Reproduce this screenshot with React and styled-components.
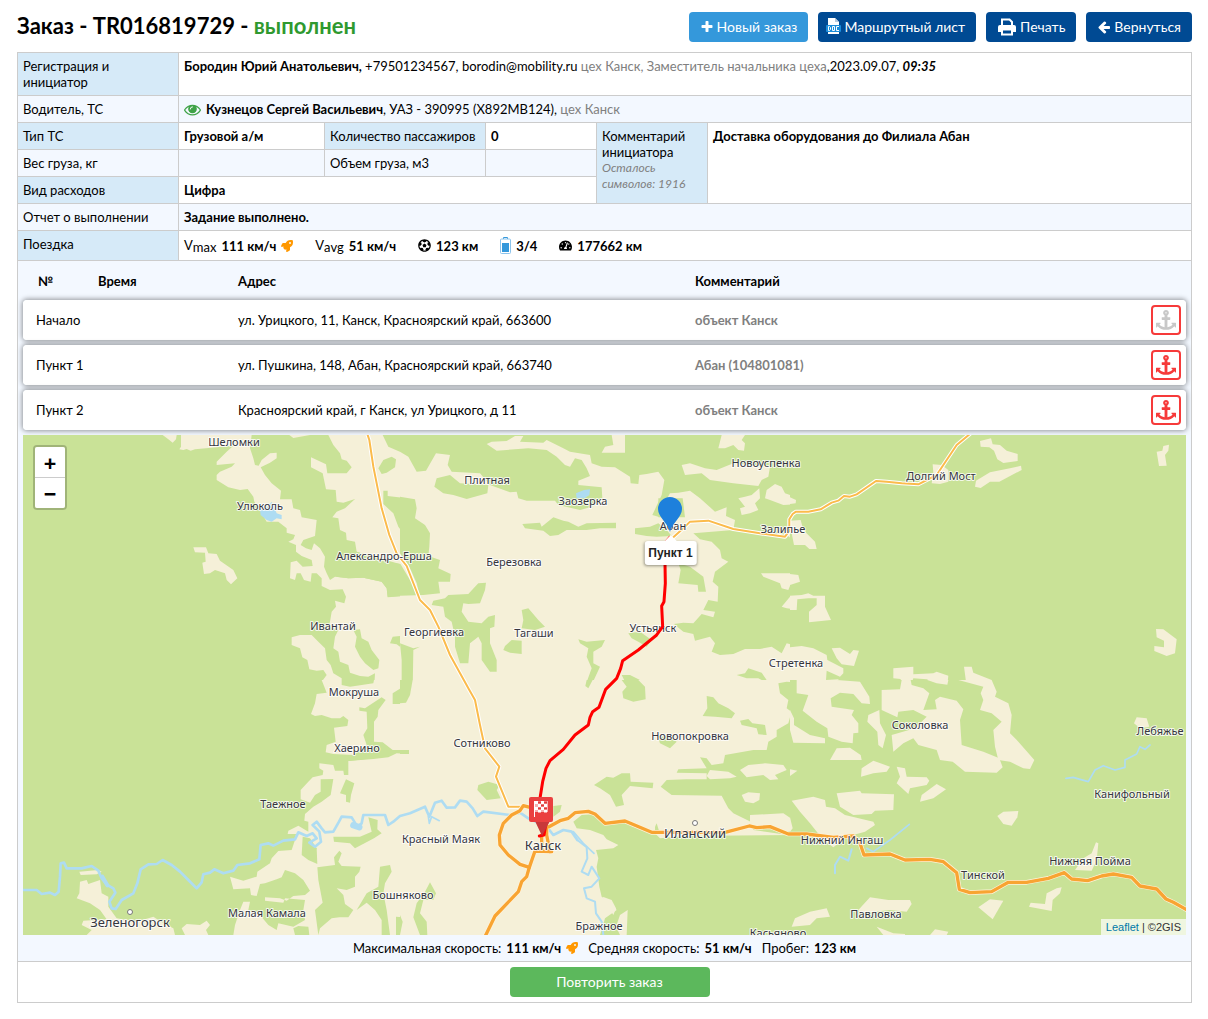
import React from "react";
import styled, { createGlobalStyle } from "styled-components";
import { FaRocket, FaFutbol, FaTachometerAlt } from "react-icons/fa";

const GlobalStyle = createGlobalStyle`
  * {
    box-sizing: border-box;
  }
  body {
    margin: 0;
    background: #fff;
    color: #000;
    font: 13px/16px "Trebuchet MS", Lato, "Open Sans", sans-serif;
  }
`;

const Page = styled.main`
  padding: 12px 16px 16px 17px;
`;

const Header = styled.header`
  display: flex;
  align-items: flex-start;
  justify-content: space-between;
  margin-bottom: 10px;
`;

const Title = styled.h1`
  margin: 0;
  font-size: 22px;
  line-height: 28px;
  font-weight: 700;
  & > span {
    color: #2f992f;
  }
`;

const Toolbar = styled.div`
  display: flex;
  gap: 10px;
`;

const Button = styled.button`
  display: inline-flex;
  align-items: center;
  justify-content: center;
  gap: 3px;
  height: 30px;
  padding: 0 11px;
  border: none;
  border-radius: 4px;
  background: ${(p) => p.$color || "#004a93"};
  color: #fff;
  font: inherit;
  font-size: 14px;
  white-space: nowrap;
  cursor: pointer;
`;

const DocButton = styled(Button)`
  padding: 0 11px 0 8px;
`;

const RepeatButton = styled(Button)`
  width: 200px;
`;

const OrderTable = styled.table`
  width: 100%;
  table-layout: fixed;
  border-collapse: collapse;
`;

const Col = styled.col`
  width: ${(p) => p.$width}px;
`;

const Row = styled.tr`
  background: ${(p) => (p.$even ? "#f3f8ff" : "#fff")};
`;

const Label = styled.th`
  padding: 5px;
  border: 1px solid #ccc;
  background: ${(p) => (p.$even ? "transparent" : "#d6eaf8")};
  font-weight: 400;
  text-align: left;
  vertical-align: top;
`;

const Value = styled.td`
  padding: 5px;
  border: 1px solid #ccc;
  vertical-align: top;
`;

const Footer = styled(Value)`
  padding-left: 15px;
  text-align: center;
`;

const PointsCell = styled(Value)`
  padding: 0 5px;
`;

const Muted = styled.span`
  color: #808080;
`;

const Hint = styled.em`
  display: block;
  color: #808080;
  font-size: 12px;
`;

const Driver = styled.div`
  display: flex;
  align-items: center;
  gap: 5px;
  height: 16px;
  & > svg {
    color: #3fa348;
  }
`;

const Trip = styled.div`
  display: flex;
  align-items: center;
  gap: 22px;
  height: 19px;
  line-height: 14px;
  & sub {
    font-size: 13px;
    line-height: 1;
    vertical-align: -2px;
  }
`;

const Metric = styled.span`
  display: inline-flex;
  align-items: center;
  gap: 5px;
`;

const Points = styled.table`
  width: 100%;
  table-layout: fixed;
  border-spacing: 0 5px;
`;

const PointsHead = styled.th`
  height: 29px;
  padding: 0 5px;
  text-align: left;
  &:first-child {
    padding-left: 15px;
  }
`;

const PointRow = styled.tr`
  border-radius: 4px;
  box-shadow: 0 0 5px 1px rgba(0, 0, 0, 0.4);
`;

const PointCell = styled.td`
  height: 40px;
  padding: 0 5px;
  background: #fff;
  color: ${(p) => (p.$comment ? "#808080" : "#000")};
  font-weight: ${(p) => (p.$comment ? 700 : 400)};
  &:first-child {
    padding-left: 13px;
    border-radius: 4px 0 0 4px;
  }
  &:last-child {
    border-radius: 0 4px 4px 0;
  }
`;

const AnchorButton = styled.button`
  display: flex;
  align-items: center;
  justify-content: center;
  width: 30px;
  height: 30px;
  padding: 0;
  border: 2px solid #f63a3a;
  border-radius: 4px;
  background: #fff;
  color: ${(p) => (p.$off ? "#c8c8c8" : "#f63a3a")};
  cursor: pointer;
`;

const MapBox = styled.div`
  position: relative;
  height: 500px;
  overflow: hidden;
  background: #c9e297;
`;

const MapCanvas = styled.svg`
  display: block;
  width: 100%;
  height: 100%;
  font-family: "Noto Sans", sans-serif;
`;

const Place = styled.text`
  font-size: ${(p) => (p.$city ? 13 : 11)}px;
  fill: #36363e;
  stroke: rgba(255, 255, 255, 0.8);
  stroke-width: 2px;
  stroke-linejoin: round;
  paint-order: stroke;
  text-anchor: middle;
`;

const ZoomControl = styled.div`
  position: absolute;
  top: 10px;
  left: 10px;
  display: flex;
  flex-direction: column;
  border: 2px solid rgba(0, 0, 0, 0.2);
  border-radius: 4px;
  background-clip: padding-box;
`;

const ZoomButton = styled.button`
  width: 30px;
  height: ${(p) => (p.$last ? 30 : 31)}px;
  padding: 0;
  border: none;
  border-bottom: ${(p) => (p.$last ? "none" : "1px solid #ccc")};
  border-radius: ${(p) => (p.$last ? "0 0 2px 2px" : "2px 2px 0 0")};
  background: #fff;
  color: #000;
  font: bold 22px/28px "Open Sans", sans-serif;
  cursor: pointer;
`;

const Tooltip = styled.div`
  position: absolute;
  top: 106px;
  left: calc(50% + 66px);
  transform: translateX(-50%);
  padding: 4px;
  border-radius: 3px;
  background: #fff;
  box-shadow: 0 1px 3px rgba(0, 0, 0, 0.4);
  color: #222;
  font: bold 12px/16px "Liberation Sans", Arial, sans-serif;
  white-space: nowrap;
  &::before {
    content: "";
    position: absolute;
    top: -12px;
    left: 50%;
    margin-left: -6px;
    border: 6px solid transparent;
    border-bottom-color: #fff;
  }
`;

const Attribution = styled.div`
  position: absolute;
  right: 0;
  bottom: 0;
  padding: 0 5px;
  background: rgba(255, 255, 255, 0.7);
  color: #333;
  font: 11px/16px "Liberation Sans", Arial, sans-serif;
  & a {
    color: #0078a8;
    text-decoration: none;
  }
`;

const Summary = styled.div`
  display: flex;
  justify-content: center;
  gap: 10px;
  padding: 5px 0;
`;

const PlusIcon = () => (
  <svg width="14" height="14" viewBox="0 0 1792 1792" fill="currentColor" aria-hidden="true">
    <path d="M1600 736v192q0 40-28 68t-68 28h-416v416q0 40-28 68t-68 28h-192q-40 0-68-28t-28-68v-416h-416q-40 0-68-28t-28-68v-192q0-40 28-68t68-28h416v-416q0-40 28-68t68-28h192q40 0 68 28t28 68v416h416q40 0 68 28t28 68z" />
  </svg>
);

const ArrowLeftIcon = () => (
  <svg width="14" height="14" viewBox="0 0 1792 1792" fill="currentColor" aria-hidden="true">
    <path d="M1664 896v128q0 53-32.500 90.500t-84.500 37.500h-704l293 294q38 36 38 90t-38 90l-75 76q-37 37-90 37-52 0-91-37l-651-652q-37-37-37-90 0-52 37-91l651-650q38-38 91-38 52 0 90 38l75 74q38 38 38 91t-38 91l-293 293h704q52 0 84.500 37.500t32.500 90.500z" />
  </svg>
);

const EyeIcon = () => (
  <svg width="17" height="17" viewBox="0 0 1792 1792" fill="currentColor" aria-hidden="true">
    <path d="M1664 960q-152-236-381-353 61 104 61 225 0 185-131.500 316.500t-316.500 131.500-316.500-131.500-131.500-316.500q0-121 61-225-229 117-381 353 133 205 333.500 326.500t434.500 121.500 434.500-121.500 333.500-326.500zm-720-384q0-20-14-34t-34-14q-125 0-214.500 89.500t-89.500 214.500q0 20 14 34t34 14 34-14 14-34q0-86 61-147t147-61q20 0 34-14t14-34zm848 384q0 34-20 69-140 230-376.500 368.500t-499.500 138.500-499.500-139-376.500-368q-20-35-20-69t20-69q140-229 376.500-368t499.500-139 499.500 139 376.500 368q20 35 20 69z" />
    <circle cx="896" cy="850" r="400" />
    <path d="M660 850q0-236 236-236" fill="none" stroke="#fff" strokeWidth="100" strokeLinecap="round" />
  </svg>
);

const AnchorIcon = () => (
  <svg width="20" height="20" viewBox="0 0 1792 1792" fill="currentColor" aria-hidden="true">
    <path d="M960 256q0-26-19-45t-45-19-45 19-19 45 19 45 45 19 45-19 19-45zm832 928v352q0 22-20 30-8 2-12 2-12 0-23-9l-93-93q-119 143-318.500 226.500t-429.500 83.500-429.500-83.500-318.500-226.500l-93 93q-9 9-23 9-4 0-12-2-20-8-20-30v-352q0-14 9-23t23-9h352q22 0 30 20 8 19-7 35l-100 100q67 91 189.500 153.500t271.500 82.500v-647h-192q-26 0-45-19t-19-45v-128q0-26 19-45t45-19h192v-163q-58-34-93-92.500t-35-128.500q0-106 75-181t181-75 181 75 75 181q0 70-35 128.500t-93 92.500v163h192q26 0 45 19t19 45v128q0 26-19 45t-45 19h-192v647q149-20 271.500-82.500t189.500-153.500l-100-100q-15-16-7-35 8-20 30-20h352q14 0 23 9t9 23z" />
  </svg>
);

const DocIcon = () => (
  <svg width="15" height="18" viewBox="0 0 15 18" aria-hidden="true">
    <path d="M2 0h7l4 4v4H2z" fill="#fff" />
    <path d="M9 0v4h4z" fill="#b9cadb" />
    <rect y="7" width="15" height="7" rx="1" fill="#1b8ddb" />
    <path
      d="M2.500 8.500v4h1l1-1v-2l-1-1zM6.500 8.500h2v4h-2zM13 8.500h-2.500v4H13"
      fill="none"
      stroke="#fff"
    />
    <path d="M2 14h11v2H2z" fill="#fff" />
  </svg>
);

const PrintIcon = () => (
  <svg width="20" height="18" viewBox="0 0 20 18" fill="none" aria-hidden="true">
    <path d="M5 8V1.500h7.500L15 4v4" stroke="#fff" strokeWidth="2" />
    <path d="M3 7h14a2 2 0 0 1 2 2v5h-3v-3H4v3H1V9a2 2 0 0 1 2-2z" fill="#fff" />
    <path d="M5 11.500h10v5H5z" stroke="#fff" strokeWidth="2" />
  </svg>
);

const BatteryIcon = () => (
  <svg width="11" height="17" viewBox="0 0 11 17" aria-hidden="true">
    <path d="M3.500 2V.5h4V2" fill="none" stroke="#3498db" />
    <rect x=".5" y="2" width="10" height="14.500" rx="1" fill="#fff" stroke="#8cc4ec" />
    <path d="M2 6h7v9H2z" fill="#3498db" />
  </svg>
);

const Rocket = () => <FaRocket size={12} color="#ff9800" aria-hidden="true" />;

const points = [
  { name: "Начало", address: "ул. Урицкого, 11, Канск, Красноярский край, 663600", comment: "объект Канск", off: true },
  { name: "Пункт 1", address: "ул. Пушкина, 148, Абан, Красноярский край, 663740", comment: "Абан (104801081)" },
  { name: "Пункт 2", address: "Красноярский край, г Канск, ул Урицкого, д 11", comment: "объект Канск" },
];

const places = [
  ["Шеломки", 211, 11],
  ["Улюколь", 237, 75],
  ["Александро-Ерша", 361, 125],
  ["Ивантай", 310, 195],
  ["Мокруша", 331, 261],
  ["Хаерино", 334, 317],
  ["Таежное", 260, 373],
  ["Малая Камала", 244, 482],
  ["Бошняково", 380, 464],
  ["Красный Маяк", 418, 408],
  ["Сотниково", 459, 312],
  ["Георгиевка", 411, 201],
  ["Тагаши", 511, 202],
  ["Березовка", 491, 131],
  ["Плитная", 464, 49],
  ["Заозерка", 560, 70],
  ["Абан", 650, 95],
  ["Устьянск", 630, 197],
  ["Новоуспенка", 743, 32],
  ["Залипье", 760, 98],
  ["Долгий Мост", 918, 45],
  ["Стретенка", 773, 232],
  ["Новопокровка", 667, 305],
  ["Соколовка", 897, 294],
  ["Лебяжье", 1137, 300],
  ["Канифольный", 1109, 363],
  ["Нижняя Пойма", 1067, 430],
  ["Тинской", 960, 444],
  ["Нижний Ингаш", 819, 409],
  ["Павловка", 853, 483],
  ["Касьяново", 755, 502],
  ["Бражное", 576, 495],
  ["Зеленогорск", 107, 492, true],
  ["Канск", 520, 415, true],
  ["Иланский", 672, 403, true],
];

const FOREST = "#c9e297";
const FIELD = "#f5f0d8";
const WATER = "#aedcf2";

// tiles are drawn in their own 1200x780 grid, three units to a pixel
const tiles = [
  {
    x: -3,
    y: -5,
    base: FOREST,
    shapes: [
      [FIELD, "428,15 470,15 468,28 458,38 445,28"],
      [FIELD, "483,15 695,15 690,55 700,85 705,105 716,107 725,90 750,70 770,68 770,85 750,98 722,112 735,135 755,160 783,182 780,208 815,208 820,235 840,240 845,262 890,270 885,318 865,325 850,330 842,345 858,355 875,360 882,340 900,355 915,380 912,410 920,430 930,450 945,440 985,445 1030,443 1085,455 1100,475 1103,500 1170,496 1200,490 1200,780 1062,780 1065,730 1045,740 1020,738 990,728 985,705 960,695 955,665 940,655 945,620 955,600 925,590 930,575 935,545 948,530 945,512 973,520 978,500 968,478 930,480 905,468 905,445 890,430 875,430 872,455 852,450 842,430 830,430 825,450 810,445 812,397 830,392 848,410 878,408 875,390 845,378 828,365 828,345 805,335 820,328 825,315 800,308 800,295 775,275 740,275 720,240 703,215 700,200 683,177 660,180 625,172 590,150 590,135 600,125 635,110 645,100 590,105 590,95 620,65 640,47 525,58 512,62 500,57 490,60 478,58 483,50"],
      [FIELD, "815,645 815,622 840,615 875,615 895,635 915,655 920,690 932,705 940,730 965,745 965,780 905,780 905,755 920,735 910,720 890,722 868,718 862,690 847,682 840,655"],
      [FOREST, "1110,640 1118,620 1140,618 1155,632 1178,647 1200,655 1180,670 1176,735 1180,780 1142,780 1142,700 1153,660 1130,643"],
      [FIELD, "1140,618 1160,625 1180,640 1170,646 1155,632"],
      [FIELD, "808,15 870,15 820,24"],
      [FIELD, "925,15 1200,15 1200,370 1200,510 1160,408 1010,365 1005,335 980,330 978,308 960,300 955,265 937,262 950,245 975,235 1005,207 970,218 950,215 947,180 918,178 908,130 873,112 873,82 918,103 922,130 980,130 995,112 980,92 965,88 960,70 940,45"],
      [FOREST, "1088,15 1105,50 1150,70 1185,110 1200,125 1200,15"],
      [FOREST, "1075,115 1090,90 1115,80 1128,88 1125,112 1100,128 1085,132"],
      [FOREST, "1090,182 1103,182 1103,198 1180,207 1200,210 1200,400 1165,330 1135,290 1120,250 1090,222"],
      [FIELD, "1200,265 1192,300 1200,302"],
      [FOREST, "1010,365 1100,395 1160,405 1200,495 1103,502 1100,475 1085,455 1030,443 985,445 950,440 930,400 960,370"],
      [FOREST, "1000,600 1020,598 1025,625 1045,635 1055,660 1078,690 1075,715 1060,720 1035,700 1020,680 1005,650 1010,620"],
      [FIELD, "520,352 558,352 565,370 590,372 600,392 640,420 652,445 633,463 620,450 615,430 585,420 570,430 552,432 547,398 557,395 555,368 525,367"],
      [WATER, "720,240 740,235 755,215 770,250 785,255 785,268 770,265 755,275 740,270 722,255"],
    ],
  },
  {
    x: 377,
    y: -5,
    base: FIELD,
    shapes: [
      [FOREST, "0,15 1200,15 1200,650 1160,640 1145,670 1115,650 1080,657 1035,657 1000,672 960,675 935,665 945,640 930,620 885,632 880,612 850,605 822,582 850,578 880,580 905,552 940,562 945,545 910,540 925,510 953,515 955,470 938,455 945,425 985,395 965,385 960,360 935,335 900,328 880,310 1000,300 1005,270 978,258 980,232 945,245 900,205 870,182 835,188 810,190 793,220 780,262 757,255 785,195 793,150 775,125 740,132 718,135 715,162 692,160 690,140 645,112 605,110 575,100 570,75 510,65 490,55 440,30 430,38 360,35 370,18 345,18 320,33 275,35 260,42 290,62 385,55 440,60 470,80 495,105 510,110 525,85 545,90 560,115 570,138 535,152 535,165 605,172 607,205 570,232 540,240 475,225 465,212 380,212 355,205 350,185 330,187 270,165 240,130 155,125 143,105 150,75 108,70 78,122 50,125 25,80 0,65"],
      [FOREST, "110,145 150,135 180,160 265,165 262,190 200,207 160,195 130,190 103,170"],
      [FOREST, "775,205 848,205 855,262 775,262"],
      [FOREST, "705,295 750,290 775,280 800,300 815,318 770,320 740,318 705,312"],
      [FOREST, "367,282 420,278 425,290 460,262 490,272 505,275 535,290 560,280 648,278 648,295 600,295 560,300 500,300 475,315 450,318 430,302 375,295"],
      [FOREST, "0,200 45,208 50,235 45,265 75,285 90,310 88,350 85,378 120,390 115,415 152,432 150,455 115,455 120,490 70,495 0,497"],
      [FIELD, "0,370 28,410 50,460 60,500 0,400"],
      [FOREST, "235,460 258,458 255,480 240,520 205,522 190,520 185,545 205,575 245,580 265,560 285,555 283,590 270,595 270,640 290,690 290,725 270,725 245,690 245,640 235,620 210,640 205,700 180,700 165,650 165,620 155,575 135,560 130,530 95,525 100,512 135,505 145,495 205,492 225,470"],
      [FOREST, "365,540 385,535 415,570 435,590 405,600 365,595 370,570"],
      [FOREST, "335,630 365,632 365,672 330,668 310,660 315,648"],
      [FOREST, "535,628 560,635 615,630 605,650 580,665 580,700 600,710 570,775 555,770 575,715 560,680 565,655 540,640"],
      [FOREST, "667,780 680,765 665,735 690,735 720,750 735,770 738,780"],
      [FOREST, "685,610 720,605 755,630 740,650 715,635 695,625"],
      [FOREST, "835,400 870,410 910,440 918,485 895,485 893,465 835,460 842,420"],
      [FOREST, "0,640 40,655 60,650 40,660 38,780 5,780 5,690"],
      [FOREST, "1010,735 1035,730 1045,715 1085,728 1100,750 1095,755 1075,745 1040,745"],
      [FIELD, "635,15 675,15 675,68 605,68 615,50 640,45"],
      [FIELD, "965,15 1035,15 1025,30 1035,40 1032,62 1015,60 1000,45 975,55 955,55"],
      [FIELD, "845,105 870,100 915,115 950,120 1000,100 1110,110 1105,140 1085,150 1075,168 1000,160 930,150 905,130 855,135"],
      [FIELD, "1100,180 1125,162 1145,170 1155,190 1185,200 1200,205 1200,222 1150,225 1110,210 1095,205"],
      [FIELD, "1015,205 1035,200 1055,195 1078,175 1080,205 1065,220 1075,240 1050,250 1025,255 1020,235 1035,230"],
      [FIELD, "1083,430 1170,430 1200,440 1200,455 1175,455 1165,480 1145,475 1140,460 1090,440"],
      [FIELD, "1145,530 1170,500 1200,495 1200,540 1160,535"],
      [FIELD, "1160,315 1200,270 1200,345 1180,330"],
      [WATER, "528,190 552,180 570,178 568,195 553,205 530,205"],
    ],
  },
  {
    x: 767,
    y: -5,
    base: FOREST,
    shapes: [
      [FIELD, "570,33 603,25 608,43 630,45 650,62 683,72 683,93 640,99 622,88 612,62 598,52 572,50"],
      [FIELD, "555,170 558,152 600,127 660,115 693,107 695,120 685,125 628,155 600,155 572,174"],
      [FIELD, "1100,65 1117,62 1120,48 1137,44 1135,62 1125,75 1130,107 1107,108"],
      [FIELD, "428,103 455,105 475,120 475,155 450,162 425,160 430,130"],
      [FIELD, "0,202 18,210 17,220 0,222"],
      [FIELD, "5,310 0,272 32,270 40,300 75,335 80,357 58,357 45,345 12,345"],
      [FIELD, "0,432 25,435 30,455 0,465"],
      [FIELD, "0,497 35,495 55,490 70,497 105,497 105,530 123,570 57,577 57,545 80,525 80,505 55,505 22,508 20,540 0,540"],
      [FIELD, "1098,597 1120,598 1160,628 1155,670 1130,678 1093,663 1093,648 1122,652 1122,632 1100,622"],
      [FIELD, "0,652 35,648 70,655 110,675 112,690 160,715 160,730 150,740 110,722 108,750 145,748 150,765 205,755 230,780 0,780"],
      [FIELD, "125,655 150,653 180,672 190,660 207,662 192,708 155,703 140,685"],
      [FIELD, "310,715 370,710 370,733 430,730 440,725 475,737 472,765 440,762 410,748 370,745 365,760 375,780 300,780 332,762 332,747 310,745"],
      [FIELD, "522,710 545,710 550,728 605,750 615,780 590,780 585,760 528,755"],
    ],
  },
  {
    x: -3,
    y: 245,
    base: FOREST,
    shapes: [
      [FIELD, "905,0 965,0 965,15 990,20 1060,10 1062,0 1140,0 1142,25 1118,40 1118,72 1145,72 1168,45 1178,0 1200,0 1200,765 640,765 645,735 660,690 670,665 690,665 685,690 720,705 745,735 770,750 775,730 820,740 855,720 850,690 855,660 795,655 790,668 735,662 735,652 780,655 800,662 820,648 855,645 870,632 850,600 825,580 795,570 785,592 770,598 735,610 720,612 710,648 693,645 690,625 640,628 630,590 670,602 710,590 712,575 750,550 755,535 775,513 815,510 825,480 828,462 803,462 805,452 835,437 865,455 865,425 853,422 855,402 880,380 905,365 932,345 940,297 902,298 902,335 885,345 870,368 842,358 842,330 865,305 878,292 908,285 910,272 898,265 898,250 940,255 945,272 970,272 972,285 985,285 985,243 1060,235 1000,225 940,222 917,217 920,195 947,185 942,143 982,138 985,120 970,108 960,115 935,115 905,105 885,108 873,102 885,70 890,42 920,38"],
      [FOREST, "1097,60 1085,52 1060,68 1035,85 1018,82 1018,92 1040,95 1042,145 1030,165 1040,195 1000,225 985,243 1060,237 1105,232 1130,220 1167,222 1167,210 1118,210 1088,187 1062,185 1062,125 1073,110 1075,90"],
      [FOREST, "978,298 1003,310 993,345 990,368 978,365 978,345 960,340"],
      [FOREST, "1045,412 1073,420 1072,448 1085,460 1062,475 1005,505 990,490 942,485 940,470 1020,470 1055,455"],
      [FOREST, "848,470 870,475 890,505 892,552 865,540 845,525"],
      [FOREST, "892,562 945,555 942,532 958,512 965,520 955,545 965,558 1022,560 1018,575 1005,590 1005,620 980,630 950,625 970,645 975,672 1000,690 985,712 958,712 935,715 900,745 895,765 885,690 908,668 895,600"],
      [FOREST, "1080,560 1110,555 1115,575 1095,610 1090,640 1100,690 1110,765 1085,765 1085,720 1065,690 1040,668 1010,690 1040,640 1075,620"],
      [FOREST, "1128,710 1148,712 1145,765 1128,765"],
      [FOREST, "820,745 835,738 865,740 868,765 825,765"],
      [FIELD, "178,575 235,570 245,575 230,583 182,585"],
      [FIELD, "180,605 200,600 205,612 240,600 245,640 265,650 265,680 290,715 350,725 400,710 430,730 460,745 465,765 200,765 215,750 185,735 190,722 260,718 240,690 210,670 190,662 170,655 178,640"],
      [FIELD, "485,745 500,732 540,735 560,722 570,735 558,750 565,765 495,765"],
    ],
  },
  {
    x: 377,
    y: 245,
    base: FIELD,
    shapes: [
      [FOREST, "0,0 38,0 30,45 18,68 0,70"],
      [FOREST, "0,210 27,210 27,222 0,222"],
      [FOREST, "560,0 578,0 565,25 556,18"],
      [FOREST, "665,0 715,0 735,20 737,58 700,65 670,55 667,35 680,20"],
      [FOREST, "920,48 940,52 955,70 985,85 1005,100 995,115 945,110 908,108 922,85"],
      [FOREST, "1020,122 1045,117 1057,130 1095,135 1100,165 1075,163 1070,145 1025,135"],
      [FOREST, "1135,10 1160,5 1200,8 1200,115 1160,85 1165,60 1140,40"],
      [FOREST, "775,175 800,165 830,185 810,205 780,190"],
      [FOREST, "1200,120 1170,112 1165,130 1130,150 1130,170 1105,185 1100,210 1060,210 975,225 970,250 935,255 920,235 900,232 920,265 835,268 830,278 920,280 920,298 860,298 800,300 782,320 815,345 965,347 985,385 1000,400 1052,425 1060,450 1200,470"],
      [FOREST, "530,445 520,425 545,405 580,403 605,425 670,425 760,455 780,475 860,468 1200,465 1200,765 680,765 683,690 660,705 648,740 660,765 600,765 615,715 650,690 635,670 605,650 598,620 590,560 595,535 588,510 640,505 655,495 620,478 610,465 570,450"],
      [FOREST, "582,315 620,290 640,293 665,280 690,280 692,305 760,308 758,325 690,318 665,345 672,375 648,380 630,345 600,325"],
      [FOREST, "235,315 265,305 300,315 290,330 302,355 260,360 232,330"],
      [FOREST, "460,378 485,375 480,395 460,410"],
      [FOREST, "765,455 765,440 770,430 778,455"],
      [FOREST, "90,607 108,640 100,660 70,660 60,700 80,725 82,765 60,765 40,712 50,670 75,635"],
      [FOREST, "0,705 8,725 0,765"],
      [FIELD, "930,270 985,275 1010,290 990,295 930,298 920,288"],
      [FIELD, "1020,270 1045,255 1095,250 1150,255 1160,270 1125,285 1135,298 1110,300 1090,285 1040,292"],
      [FIELD, "1025,345 1045,337 1080,340 1078,360 1060,370 1035,365"],
      [FIELD, "1050,405 1150,400 1180,420 1200,440 1200,458 1050,440"],
      [FIELD, "608,650 635,660 648,685 640,705"],
    ],
  },
  {
    x: 767,
    y: 245,
    base: FOREST,
    shapes: [
      [FIELD, "20,0 140,0 210,5 238,50 240,72 215,70 190,42 150,38 122,55 125,80 192,90 185,105 205,130 205,158 190,160 188,190 155,185 115,170 112,145 80,125 38,92 55,45 20,40"],
      [FIELD, "0,90 12,115 12,135 60,165 105,175 105,190 10,188 0,150"],
      [FIELD, "275,30 330,28 335,0 362,0 365,15 400,25 418,40 400,90 440,88 435,60 450,50 500,62 520,88 510,120 515,195 580,215 628,235 638,262 620,278 525,275 488,245 450,240 440,210 385,195 370,175 340,190 310,215 305,165 375,145 410,110 370,90 325,95 322,112 275,90"],
      [FIELD, "268,90 270,130 288,165 278,205 265,195 262,155 232,125 235,105"],
      [FIELD, "120,240 140,205 180,203 212,225 215,240"],
      [FIELD, "213,290 215,265 250,242 300,260 290,275 250,280"],
      [FIELD, "320,260 345,265 350,290 410,292 418,302 410,315 360,325 355,342 320,310 330,290"],
      [FIELD, "390,365 395,345 440,312 468,328 430,355"],
      [FIELD, "412,0 475,0 472,14 440,10"],
      [FIELD, "505,0 605,0 620,35 615,50 655,70 665,105 660,160 685,185 733,240 720,267 700,265 660,245 625,240 615,200 610,150 635,125 605,100 570,90 580,60 572,40 580,20"],
      [FIELD, "1032,130 1040,112 1070,115 1078,140 1050,145"],
      [FIELD, "140,340 210,332 215,340 312,343 310,390 255,392 245,402 190,405 150,380"],
      [FIELD, "5,362 70,350 105,360 108,380 135,385 165,405 250,425 255,435 225,455 170,470 130,502 100,480 60,430 30,395"],
      [FIELD, "0,268 22,272 0,288"],
      [FIELD, "0,412 8,445 0,455"],
      [FIELD, "622,408 640,395 685,393 682,412 665,437 640,432"],
      [FIELD, "855,570 880,535 905,520 918,487 925,490 920,540 905,572"],
      [FIELD, "717,680 722,668 765,672 770,640 800,625 815,622 810,640 788,660 785,693"],
      [FIELD, "205,690 240,652 295,660 360,660 365,672 350,695 300,690 210,700"],
      [FIELD, "5,740 15,715 60,695 110,685 120,710 80,715 60,735"],
      [FIELD, "565,682 600,658 640,662 608,718"],
      [FIELD, "420,765 435,748 475,755 470,765"],
      [FIELD, "260,740 310,760 345,762 345,765 280,765"],
    ],
  },
];

const rivers = [
  [5, "10,1380 50,1380 65,1392 90,1388 105,1395 116,1385 120,1340 122,1300 132,1298 140,1315 185,1315 215,1308 235,1322 245,1345 262,1365 280,1375 286,1388 268,1415 275,1435 287,1437 305,1410 340,1390 352,1360 362,1318 385,1303 410,1302 428,1290 455,1305 480,1325 505,1350 530,1375 545,1357 550,1333 570,1328 583,1318 610,1330 640,1322 652,1305 690,1300 718,1288 722,1245 745,1240 760,1247 790,1232 825,1228 835,1207 860,1218 878,1210 890,1225 868,1238 885,1250 903,1235 898,1205 878,1185 890,1175 905,1195 915,1207 940,1205 957,1175 965,1160 995,1162 1012,1190 1025,1180 1030,1155 1060,1155 1095,1155 1105,1185 1120,1175 1140,1158 1170,1150 1215,1130 1228,1160 1245,1118 1265,1112 1280,1133 1305,1132 1320,1112 1340,1115 1358,1135 1372,1158 1390,1145 1470,1155 1500,1148 1525,1165 1580,1190 1600,1215 1630,1200 1655,1205 1672,1230"],
  [3, "1672,1230 1700,1252 1702,1285 1685,1325 1705,1335 1715,1310 1738,1345 1715,1370 1692,1375 1700,1405 1725,1415 1728,1450 1745,1475 1750,1515"],
  [2, "1660,1205 1690,1240 1722,1270"],
  [2, "1225,1160 1228,1180 1235,1160 1258,1172"],
  [2, "3138,1045 3160,1042 3180,1048 3205,1055 3225,1020 3250,1007 3285,1020 3315,1012 3315,990 3350,972 3360,950 3375,958 3390,945"],
  [2, "2668,1183 2610,1230 2560,1265 2540,1255"],
  [3, "2495,1258 2485,1292 2460,1280 2445,1305 2445,1330"],
  [16, "1000,1186 1018,1192"],
  [9, "247,1340 262,1366"],
];

const minorRoads = [
  "1042,12 1048,30 1060,110 1085,235 1108,315 1130,370 1160,408 1200,510 1230,540 1255,590 1290,675 1348,780 1365,810 1380,885 1395,955 1438,1010 1428,1040 1465,1130 1505,1130",
  "1960,322 1995,290 2010,275 2065,272 2140,297 2220,310 2295,320 2308,303 2308,268 2318,252 2328,245 2365,245 2402,238 2435,218 2455,212 2472,198 2490,200 2510,193 2568,153 2600,155 2645,160 2695,163 2750,135 2810,45 2852,10",
];

const highways = [
  "1587,1190 1620,1172 1645,1165 1665,1148 1705,1144 1725,1152 1755,1180 1815,1173 1895,1207 2115,1207 2188,1188 2210,1193 2250,1190 2305,1212 2360,1212 2440,1222 2500,1218 2520,1240 2532,1275 2610,1272 2655,1290 2730,1288 2770,1295 2810,1328 2818,1378 2850,1388 2915,1385 2965,1357 3020,1357 3085,1345 3133,1328 3155,1347 3203,1352 3245,1338 3280,1332 3335,1342 3360,1368 3410,1377 3438,1407 3460,1417 3503,1441",
  "1530,1132 1510,1127 1500,1142 1475,1155 1450,1180 1438,1215 1440,1245 1465,1275 1500,1303 1528,1312",
  "1595,1265 1545,1263 1528,1312 1520,1340 1505,1355 1495,1385 1425,1458 1395,1520",
  "1580,1190 1580,1215 1590,1265",
  "1565,1215 1565,1262",
];

const track =
  "1950,322 1935,340 1935,400 1936,460 1932,515 1925,528 1928,590 1910,615 1855,660 1808,692 1802,715 1790,745 1757,778 1737,832 1718,845 1710,862 1705,885 1665,915 1630,958 1590,992 1578,1015 1568,1055 1560,1105 1580,1170 1572,1215 1558,1218";

function OrderMap() {
  return (
    <MapBox>
      <MapCanvas viewBox="0 0 1163 500" preserveAspectRatio="xMidYMid slice">
        {tiles.map((tile) => (
          <svg key={`${tile.x}:${tile.y}`} x={tile.x} y={tile.y} width="400" height="260" viewBox="0 0 1200 780">
            <rect width="1200" height="780" fill={tile.base} />
            {tile.shapes.map(([fill, shape]) => (
              <polygon key={shape} points={shape} fill={fill} />
            ))}
          </svg>
        ))}
        <g transform="translate(-3 -5) scale(0.33333)" fill="none" strokeLinejoin="round" strokeLinecap="round">
          {rivers.map(([width, line]) => (
            <polyline key={line} points={line} stroke={WATER} strokeWidth={width + 3} />
          ))}
          {minorRoads.map((line) => (
            <polyline key={line} points={line} stroke="#fff" strokeWidth="12" />
          ))}
          {minorRoads.map((line) => (
            <polyline key={line} points={line} stroke="#fbbb4b" strokeWidth="6" />
          ))}
          {highways.map((line) => (
            <polyline key={line} points={line} stroke="#fff3d9" strokeWidth="14" />
          ))}
          {highways.map((line) => (
            <polyline key={line} points={line} stroke="#f8a432" strokeWidth="10" />
          ))}
        </g>
        <circle cx="107" cy="477" r="2.500" fill="#fff" stroke="#777" />
        <circle cx="672" cy="388" r="2.500" fill="#fff" stroke="#777" />
        {places.map(([name, x, y, city]) => (
          <Place key={name} x={x} y={y} $city={city}>
            {name}
          </Place>
        ))}
        <g transform="translate(-3 -5) scale(0.33333)" fill="none" strokeLinejoin="round" strokeLinecap="round">
          <polyline points={track} stroke="#f00" strokeWidth="9" />
        </g>
        <path d="M647 97c-2-9-12-15-12-23a12 12 0 0 1 24 0c0 8-10 14-12 23z" fill="#1e80dc" />
        <path d="M512 386h15l-8 15z" fill="#c8383a" />
        <rect x="506" y="362" width="24" height="25" rx="2" fill="#ea4040" />
        <path d="M511.500 366v16" stroke="#fff" />
        <path d="M512 366h13v11h-13z" fill="#f6b0b0" />
        <path
          d="M512 367.500h3M518 367.500h3M515 370.500h3M521 370.500h3M512 373.500h3M518 373.500h3M515 376h3M521 376h3"
          fill="none"
          stroke="#fff"
          strokeWidth="3"
        />
        <path
          d="M515 367.500h3M521 367.500h3M518 370.500h3M515 373.500h3M521 373.500h3"
          fill="none"
          stroke="#e23a3a"
          strokeWidth="2"
        />
      </MapCanvas>
      <ZoomControl>
        <ZoomButton aria-label="Приблизить">+</ZoomButton>
        <ZoomButton $last aria-label="Отдалить">
          −
        </ZoomButton>
      </ZoomControl>
      <Tooltip>Пункт 1</Tooltip>
      <Attribution>
        <a href="#leaflet">Leaflet</a> | ©2GIS
      </Attribution>
    </MapBox>
  );
}

function PointsTable() {
  return (
    <Points>
      <colgroup>
        <Col $width={70} />
        <Col $width={140} />
        <Col $width={457} />
        <col />
        <Col $width={40} />
      </colgroup>
      <thead>
        <tr>
          <PointsHead>№</PointsHead>
          <PointsHead>Время</PointsHead>
          <PointsHead>Адрес</PointsHead>
          <PointsHead colSpan={2}>Комментарий</PointsHead>
        </tr>
      </thead>
      <tbody>
        {points.map((point) => (
          <PointRow key={point.name}>
            <PointCell>{point.name}</PointCell>
            <PointCell />
            <PointCell>{point.address}</PointCell>
            <PointCell $comment>{point.comment}</PointCell>
            <PointCell>
              <AnchorButton $off={point.off} aria-label={`Привязка: ${point.name}`}>
                <AnchorIcon />
              </AnchorButton>
            </PointCell>
          </PointRow>
        ))}
      </tbody>
    </Points>
  );
}

export default function App() {
  return (
    <Page>
      <GlobalStyle />
      <Header>
        <Title>
          Заказ - TR016819729 - <span>выполнен</span>
        </Title>
        <Toolbar>
          <Button $color="#3498db">
            <PlusIcon />
            Новый заказ
          </Button>
          <DocButton>
            <DocIcon />
            Маршрутный лист
          </DocButton>
          <Button>
            <PrintIcon />
            Печать
          </Button>
          <Button>
            <ArrowLeftIcon />
            Вернуться
          </Button>
        </Toolbar>
      </Header>
      <OrderTable>
        <colgroup>
          <Col $width={161} />
          <Col $width={146} />
          <Col $width={161} />
          <Col $width={111} />
          <Col $width={111} />
          <col />
        </colgroup>
        <tbody>
          <Row>
            <Label>
              Регистрация и<br />
              инициатор
            </Label>
            <Value colSpan={5}>
              <b>Бородин Юрий Анатольевич,</b> +79501234567, borodin@mobility.ru{" "}
              <Muted>цех Канск, Заместитель начальника цеха</Muted>,2023.09.07,{" "}
              <b>
                <i>09:35</i>
              </b>
            </Value>
          </Row>
          <Row $even>
            <Label $even>Водитель, ТС</Label>
            <Value colSpan={5}>
              <Driver>
                <EyeIcon />
                <span>
                  <b>Кузнецов Сергей Васильевич</b>, УАЗ - 390995 (Х892МВ124), <Muted>цех Канск</Muted>
                </span>
              </Driver>
            </Value>
          </Row>
          <Row>
            <Label>Тип ТС</Label>
            <Value>
              <b>Грузовой а/м</b>
            </Value>
            <Label>Количество пассажиров</Label>
            <Value>
              <b>0</b>
            </Value>
            <Label rowSpan={3}>
              Комментарий инициатора
              <Hint>Осталось символов: 1916</Hint>
            </Label>
            <Value rowSpan={3}>
              <b>Доставка оборудования до Филиала Абан</b>
            </Value>
          </Row>
          <Row $even>
            <Label $even>Вес груза, кг</Label>
            <Value />
            <Label $even>Объем груза, м3</Label>
            <Value />
          </Row>
          <Row>
            <Label>Вид расходов</Label>
            <Value colSpan={3}>
              <b>Цифра</b>
            </Value>
          </Row>
          <Row $even>
            <Label $even>Отчет о выполнении</Label>
            <Value colSpan={5}>
              <b>Задание выполнено.</b>
            </Value>
          </Row>
          <Row>
            <Label>Поездка</Label>
            <Value colSpan={5}>
              <Trip>
                <Metric>
                  <span>
                    V<sub>max</sub>
                  </span>
                  <b>111 км/ч</b>
                  <Rocket />
                </Metric>
                <Metric>
                  <span>
                    V<sub>avg</sub>
                  </span>
                  <b>51 км/ч</b>
                </Metric>
                <Metric>
                  <FaFutbol size={13} aria-hidden="true" />
                  <b>123 км</b>
                </Metric>
                <Metric>
                  <BatteryIcon />
                  <b>3/4</b>
                </Metric>
                <Metric>
                  <FaTachometerAlt size={13} aria-hidden="true" />
                  <b>177662 км</b>
                </Metric>
              </Trip>
            </Value>
          </Row>
          <Row $even>
            <PointsCell colSpan={6}>
              <PointsTable />
              <OrderMap />
              <Summary>
                <Metric>
                  Максимальная скорость: <b>111 км/ч</b>
                  <Rocket />
                </Metric>
                <Metric>
                  Средняя скорость: <b>51 км/ч</b>
                </Metric>
                <Metric>
                  Пробег: <b>123 км</b>
                </Metric>
              </Summary>
            </PointsCell>
          </Row>
          <Row>
            <Footer colSpan={6}>
              <RepeatButton $color="#5cb85c">Повторить заказ</RepeatButton>
            </Footer>
          </Row>
        </tbody>
      </OrderTable>
    </Page>
  );
}
